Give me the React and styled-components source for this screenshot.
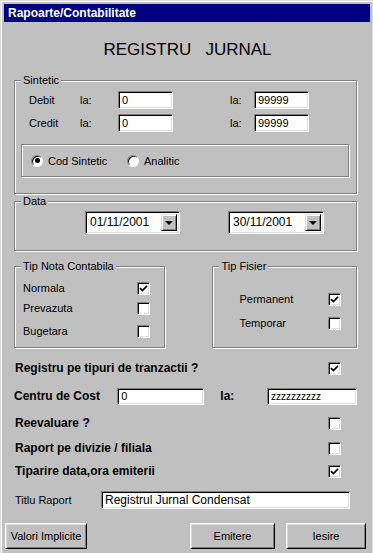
import React from 'react';
import styled, {createGlobalStyle} from 'styled-components';

const GlobalStyle = createGlobalStyle`
  html, body {
    margin: 0;
    padding: 0;
    background: #c0c0c0;
  }
  body {
    font-family: "Liberation Sans", Arial, sans-serif;
    font-size: 11px;
    color: #000;
  }
`

const Window = styled.div`
  box-sizing: border-box;
  width: 373px;
  height: 553px;
  overflow: hidden;
  background: #c0c0c0;
  border-top: 1px solid #dfdfdf;
  border-left: 1px solid #dfdfdf;
  border-right: 1px solid #dfdfdf;
  box-shadow: inset 1px 1px 0 #fff;
  padding: 3px 2px 0 3px;
`

const TitleBar = styled.div`
  height: 18px;
  background: #000080;
  color: #fff;
  font-weight: bold;
  font-size: 12px;
  line-height: 18px;
  padding-left: 4px;
`

const Content = styled.div`
  padding: 0 13px 0 10px;
`

const Heading = styled.div`
  margin-top: 18px;
  height: 20px;
  line-height: 20px;
  font-size: 17px;
  text-align: center;
  white-space: pre;
  padding-left: 4px;
`

const Group = styled.div`
  position: relative;
  box-sizing: border-box;
  width: ${p => p.$width || '100%'};
  height: ${p => p.$height};
  margin-top: ${p => p.$top || 0}px;
  border: 1px solid #808080;
  box-shadow: inset 1px 1px 0 #fff, 1px 1px 0 #fff;
`

const Legend = styled.span`
  position: absolute;
  top: -7px;
  left: 6px;
  padding: 0 2px;
  background: #c0c0c0;
  line-height: 13px;
`

const Field = styled.input`
  box-sizing: border-box;
  width: ${p => p.$width}px;
  height: ${p => p.$height || 18}px;
  margin: 0;
  padding: 0 3px;
  background: #fff;
  border: 1px solid;
  border-color: #808080 #fff #fff #808080;
  box-shadow: inset 1px 1px 0 #000, inset -1px -1px 0 #dfdfdf;
  font-family: "Liberation Sans", Arial, sans-serif;
  font-size: ${p => p.$size || 11}px;
  color: #000;
  outline: none;
`

const SinteticGrid = styled.div`
  display: grid;
  grid-template-columns: 51px 38px 55px 57px 24px 55px;
  row-gap: 5px;
  align-items: center;
  padding: 10px 0 0 14px;
`

const RadioBox = styled.div`
  box-sizing: border-box;
  height: 33px;
  margin: 12px 7px 0 6px;
  border: 1px solid #808080;
  box-shadow: inset 1px 1px 0 #fff, 1px 1px 0 #fff;
  display: grid;
  grid-template-columns: 96px auto;
  align-items: center;
  padding-left: 9px;
`

const RadioItem = styled.label`
  display: flex;
  align-items: center;
  gap: 5px;
`

const RadioDot = styled.span`
  box-sizing: border-box;
  width: 12px;
  height: 12px;
  border-radius: 50%;
  background: #fff;
  border: 1px solid;
  border-color: #808080 #fff #fff #808080;
  box-shadow: inset 1px 1px 0 #000;
  display: flex;
  align-items: center;
  justify-content: center;

  &::after {
    content: "";
    width: 5px;
    height: 5px;
    border-radius: 50%;
    background: ${p => p.$on ? '#000' : 'transparent'};
  }
`

const DataRow = styled.div`
  display: flex;
  gap: 48px;
  padding: 9px 0 0 70px;
`

const Combo = styled.div`
  box-sizing: border-box;
  width: ${p => p.$width}px;
  height: 23px;
  display: flex;
  align-items: stretch;
  background: #fff;
  border: 1px solid;
  border-color: #808080 #fff #fff #808080;
  box-shadow: inset 1px 1px 0 #000, inset -1px -1px 0 #dfdfdf;
  padding: 2px;
`

const ComboText = styled.span`
  flex: 1;
  font-size: 12px;
  line-height: 17px;
  padding-left: 2px;
`

const ComboButton = styled.span`
  box-sizing: border-box;
  width: 16px;
  background: #c0c0c0;
  border: 1px solid;
  border-color: #dfdfdf #000 #000 #dfdfdf;
  box-shadow: inset 1px 1px 0 #fff, inset -1px -1px 0 #808080;
  display: flex;
  align-items: center;
  justify-content: center;

  &::after {
    content: "";
    border-left: 4px solid transparent;
    border-right: 4px solid transparent;
    border-top: 4px solid #000;
  }
`

const TipRow = styled.div`
  display: flex;
  gap: 47px;
  margin-top: 15px;
`

const TipList = styled.div`
  padding: ${p => p.$pad};
`

const TipItem = styled.div`
  display: flex;
  align-items: center;
  justify-content: space-between;
  height: 18px;
  margin-top: ${p => p.$top || 0}px;
`

const Box = styled.span`
  box-sizing: border-box;
  width: 13px;
  height: 13px;
  flex: none;
  background: #fff;
  border: 1px solid;
  border-color: #808080 #fff #fff #808080;
  box-shadow: inset 1px 1px 0 #000, inset -1px -1px 0 #dfdfdf;
  display: flex;
  align-items: center;
  justify-content: center;
`

const OptionRow = styled.div`
  display: flex;
  align-items: center;
  justify-content: space-between;
  height: ${p => p.$height || 20}px;
  margin-top: ${p => p.$top}px;
  padding: 0 16px 0 1px;
  font-weight: bold;
  font-size: 12px;
`

const CostRow = styled.div`
  display: flex;
  align-items: center;
  height: 18px;
  margin-top: 9px;
  font-weight: bold;
  font-size: 12px;
`

const CostLabel = styled.span`
  box-sizing: border-box;
  width: ${p => p.$width}px;
  padding-left: ${p => p.$pad || 0}px;
`

const TitleRow = styled.div`
  display: flex;
  align-items: center;
  height: 18px;
  margin-top: 10px;
  padding-left: 1px;

  & > span {
    width: 86px;
  }
`

const ButtonBar = styled.div`
  display: flex;
  margin-top: 14px;
  padding-left: 1px;
`

const Button = styled.button`
  box-sizing: border-box;
  width: ${p => p.$width}px;
  height: 26px;
  margin-left: ${p => p.$left || 0}px;
  padding: 0;
  background: #c0c0c0;
  border: 1px solid;
  border-color: #fff #000 #000 #fff;
  box-shadow: inset 1px 1px 0 #dfdfdf, inset -1px -1px 0 #808080;
  font-family: "Liberation Sans", Arial, sans-serif;
  font-size: 11px;
  color: #000;
`

const Check = ({on}) => (
    <Box>
        {on && (
            <svg width="9" height="9" viewBox="0 0 9 9">
                <path d="M1 4.2 L3.4 6.6 L8 1.8" fill="none" stroke="#000" strokeWidth="1.7"/>
            </svg>
        )}
    </Box>
)

const App = () => {
    return (
        <>
            <GlobalStyle/>
            <Window>
                <TitleBar>Rapoarte/Contabilitate</TitleBar>
                <Content>
                    <Heading>REGISTRU   JURNAL</Heading>

                    <Group $height="114px" $top={20}>
                        <Legend>Sintetic</Legend>
                        <SinteticGrid>
                            <span>Debit</span>
                            <span>la:</span>
                            <Field $width={55} defaultValue="0"/>
                            <span/>
                            <span>la:</span>
                            <Field $width={55} defaultValue="99999"/>

                            <span>Credit</span>
                            <span>la:</span>
                            <Field $width={55} defaultValue="0"/>
                            <span/>
                            <span>la:</span>
                            <Field $width={55} defaultValue="99999"/>
                        </SinteticGrid>
                        <RadioBox>
                            <RadioItem><RadioDot $on/>Cod Sintetic</RadioItem>
                            <RadioItem><RadioDot/>Analitic</RadioItem>
                        </RadioBox>
                    </Group>

                    <Group $height="50px" $top={7}>
                        <Legend>Data</Legend>
                        <DataRow>
                            <Combo $width={95}>
                                <ComboText>01/11/2001</ComboText>
                                <ComboButton/>
                            </Combo>
                            <Combo $width={96}>
                                <ComboText>30/11/2001</ComboText>
                                <ComboButton/>
                            </Combo>
                        </DataRow>
                    </Group>

                    <TipRow>
                        <Group $width="152px" $height="82px">
                            <Legend>Tip Nota Contabila</Legend>
                            <TipList $pad="12px 14px 0 8px">
                                <TipItem>Normala<Check on/></TipItem>
                                <TipItem $top={2}>Prevazuta<Check/></TipItem>
                                <TipItem $top={5}>Bugetara<Check/></TipItem>
                            </TipList>
                        </Group>
                        <Group $width="145px" $height="82px">
                            <Legend>Tip Fisier</Legend>
                            <TipList $pad="23px 15px 0 26px">
                                <TipItem>Permanent<Check on/></TipItem>
                                <TipItem $top={6}>Temporar<Check/></TipItem>
                            </TipList>
                        </Group>
                    </TipRow>

                    <OptionRow $top={10}>
                        <span>Registru pe tipuri de tranzactii ?</span>
                        <Check on/>
                    </OptionRow>

                    <CostRow>
                        <CostLabel $width={104}>Centru de Cost</CostLabel>
                        <Field $width={87} $height={17} defaultValue="0"/>
                        <CostLabel $width={63} $pad={16}>la:</CostLabel>
                        <Field $width={90} $height={17} $size={10} defaultValue="zzzzzzzzzz"/>
                    </CostRow>

                    <OptionRow $top={8}>
                        <span>Reevaluare ?</span>
                        <Check/>
                    </OptionRow>
                    <OptionRow $top={5}>
                        <span>Raport pe divizie / filiala</span>
                        <Check/>
                    </OptionRow>
                    <OptionRow $top={3}>
                        <span>Tiparire data,ora emiterii</span>
                        <Check on/>
                    </OptionRow>

                    <TitleRow>
                        <span>Titlu Raport</span>
                        <Field $width={249} $size={12} defaultValue="Registrul Jurnal Condensat"/>
                    </TitleRow>
                </Content>

                <ButtonBar>
                    <Button $width={82}>Valori Implicite</Button>
                    <Button $width={85} $left={103}>Emitere</Button>
                    <Button $width={80} $left={11}>Iesire</Button>
                </ButtonBar>
            </Window>
        </>
    );
};

export default App;
